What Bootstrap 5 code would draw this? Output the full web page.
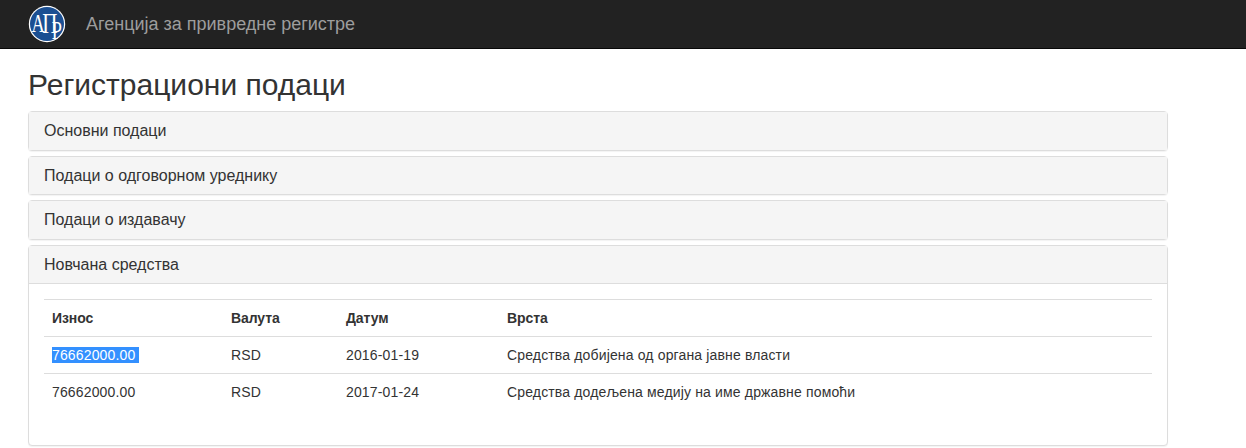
<!DOCTYPE html>
<html lang="sr">
<head>
<meta charset="utf-8">
<title>Регистрациони подаци</title>
<link href="https://cdn.jsdelivr.net/npm/bootstrap@5.3.0/dist/css/bootstrap.min.css" rel="stylesheet">
<style>
body{font-family:"Liberation Sans",Arial,sans-serif;font-size:14px;line-height:20px;color:#333;background:#fff}
.topbar{height:49px;background:#222;border-bottom:1px solid #080808;padding:0 28px}
.logo-mark{width:38px;height:38px;display:block;margin-right:20px}
.logo-mark text{font-family:"Liberation Serif",serif;fill:#fff}
.brand-name{font-size:18px;line-height:20px;color:#9d9d9d;padding:0;margin:0}
.page-wrap{width:1196px;padding:0 28px}
.page-title{font-size:30px;font-weight:500;line-height:33px;color:#333;margin:19px 0 10px}
.pane{border:1px solid #ddd;border-radius:4px;margin-bottom:5px;box-shadow:0 1px 1px rgba(0,0,0,.05);--bs-card-bg:#fff}
.pane-head{background:#f5f5f5;padding:10px 15px;font-size:16px;line-height:17.6px;color:#333}
.pane-open .pane-head{border-bottom:1px solid #ddd}
.pane-body{padding:15px}
.data-table{width:100%;margin-bottom:20px;border-collapse:collapse;table-layout:fixed;--bs-table-border-color:#ddd;color:#333}
.data-table th,.data-table td{padding:8px;border-top:1px solid #ddd;border-bottom:0;line-height:20px;font-size:14px;color:#333;box-shadow:none}
.data-table td{letter-spacing:.15px}
.data-table th{font-weight:700;letter-spacing:-.1px}
.c-a{width:179px}.c-b{width:115px}.c-c{width:161px}
.data-table td .picked{background:#3390ff;color:#fff}
</style>
</head>
<body>
<nav class="topbar d-flex align-items-center">
<svg class="logo-mark" viewBox="0 0 38 38" role="img" aria-label="АПР">
<circle cx="19" cy="19" r="18.2" fill="#fff"/>
<circle cx="19" cy="19" r="17" fill="#1b4f92"/>
<text transform="scale(.7 1)" font-size="26"><tspan x="5" y="27">А</tspan><tspan x="20.5" y="28" font-size="30">П</tspan><tspan x="34" y="34">Р</tspan></text>
</svg>
<div class="brand-name">Агенција за привредне регистре</div>
</nav>
<main class="page-wrap">
<h1 class="page-title">Регистрациони подаци</h1>
<div class="card pane"><div class="pane-head">Основни подаци</div></div>
<div class="card pane"><div class="pane-head">Подаци о одговорном уреднику</div></div>
<div class="card pane"><div class="pane-head">Подаци о издавачу</div></div>
<div class="card pane pane-open">
<div class="pane-head">Новчана средства</div>
<div class="pane-body">
<table class="table data-table">
<thead><tr><th class="c-a">Износ</th><th class="c-b">Валута</th><th class="c-c">Датум</th><th>Врста</th></tr></thead>
<tbody>
<tr><td><span class="picked">76662000.00&nbsp;</span></td><td>RSD</td><td>2016-01-19</td><td>Средства добијена од органа јавне власти</td></tr>
<tr><td>76662000.00</td><td>RSD</td><td>2017-01-24</td><td>Средства додељена медију на име државне помоћи</td></tr>
</tbody>
</table>
</div>
</div>
</main>
<script src="https://cdn.jsdelivr.net/npm/bootstrap@5.3.0/dist/js/bootstrap.bundle.min.js"></script>
</body>
</html>
